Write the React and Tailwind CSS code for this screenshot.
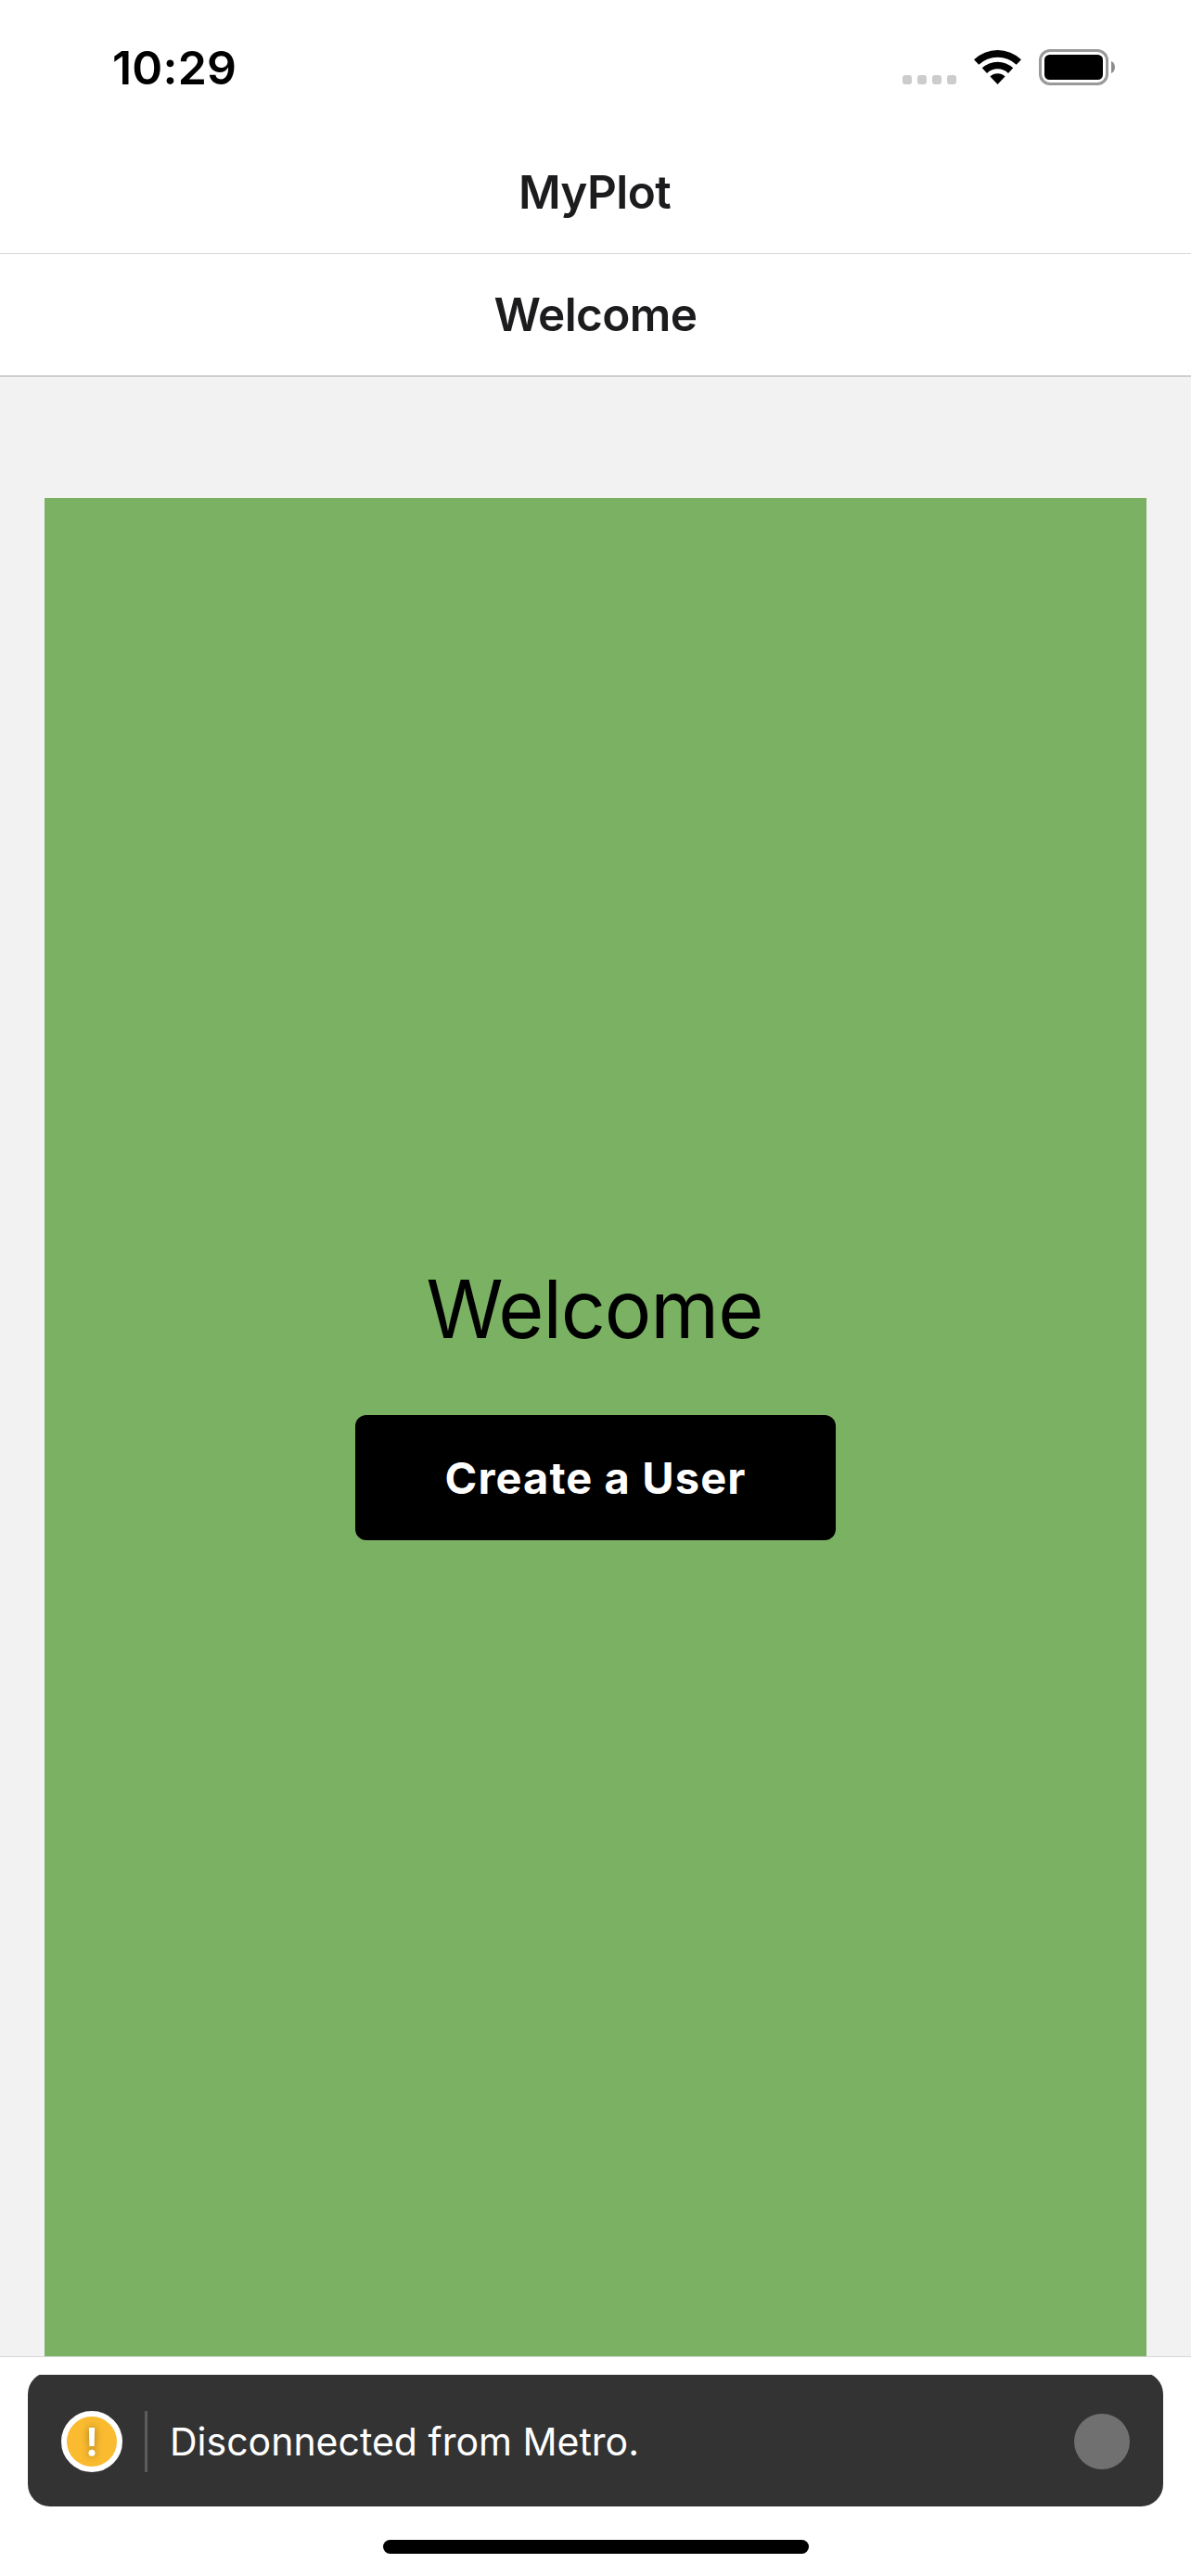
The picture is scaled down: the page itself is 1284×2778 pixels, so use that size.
function WifiIcon() {
  return (
    <svg viewBox="-76.5 -111 153 111" className="h-[37px] w-[51px]" fill="currentColor" aria-hidden="true">
      <path d="M-76.4 -80.5A111 111 0 0 1 76.4 -80.5L60.6 -63.8A88 88 0 0 0 -60.6 -63.8Z" />
      <path d="M-50.2 -52.9A73 73 0 0 1 50.2 -52.9L34.4 -36.3A50 50 0 0 0 -34.4 -36.3Z" />
      <path d="M-24.1 -25.4A35 35 0 0 1 24.1 -25.4L0 0Z" />
    </svg>
  );
}

function BatteryIcon() {
  return (
    <svg viewBox="0 0 83 39" className="h-[39px] w-[83px]" aria-hidden="true">
      <rect x="1.5" y="1.5" width="72" height="36" rx="10.5" fill="none" stroke="#999999" strokeWidth="3" />
      <rect x="6" y="6" width="63" height="27" rx="5.5" fill="#000" />
      <path d="M78 13C83.3 15 83.3 24 78 26Z" fill="#8c8c8c" />
    </svg>
  );
}

function StatusBar() {
  return (
    <div className="flex h-[141px] shrink-0 items-start justify-between bg-white pl-[121px] pr-[81px] text-black">
      <div className="mt-[43px] text-[50px] leading-[60px] font-semibold tracking-[0.2px]">10:29</div>
      <div className="mt-[53px] flex items-start">
        <div className="mt-[28px] mr-[19px] flex gap-[6px]">
          <span className="size-[10px] rounded-[3px] bg-[#cccccc]" />
          <span className="size-[10px] rounded-[3px] bg-[#cccccc]" />
          <span className="size-[10px] rounded-[3px] bg-[#cccccc]" />
          <span className="size-[10px] rounded-[3px] bg-[#cccccc]" />
        </div>
        <div className="mt-px mr-[19px]">
          <WifiIcon />
        </div>
        <BatteryIcon />
      </div>
    </div>
  );
}

function Banner() {
  return (
    <div className="mx-[30px] mt-[19px] h-[142px] overflow-hidden">
      <div className="-mt-[3px] flex h-[145px] items-center rounded-[24px] bg-[#333333] pl-[36px] pr-[36px] pt-[5px]">
        <div className="flex size-[66px] items-center justify-center rounded-full border-[6px] border-white bg-[#fabb30]">
          <svg viewBox="0 0 54 54" className="size-[54px] shrink-0 overflow-visible" aria-hidden="true">
            <g fill="#fff" className="drop-shadow-[0_0_4px_rgba(0,0,0,0.4)]">
              <path d="M23.9 12H30.1L29.6 32H24.4Z" />
              <circle cx="27" cy="39.3" r="3.5" />
            </g>
          </svg>
        </div>
        <div className="ml-[24px] h-[66px] w-[3px] bg-[#5c5c5c]" />
        <p className="ml-[24px] flex-1 text-[41px] leading-[50px] text-white">Disconnected from Metro.</p>
        <div className="size-[60px] rounded-full bg-[#707070]" />
      </div>
    </div>
  );
}

export default function App() {
  return (
    <div className="flex h-[2778px] w-[1284px] flex-col overflow-hidden bg-white font-['Inter',sans-serif]">
      <StatusBar />
      <header className="h-[133px] shrink-0 border-b border-[#d8d8d8] pr-[2px] text-center text-[49.5px] leading-[132px] font-semibold tracking-[-0.6px] text-[#1c1c1e]">
        MyPlot
      </header>
      <header className="h-[132px] shrink-0 border-b border-[#a7a7a7] text-center text-[49.5px] leading-[130px] font-semibold tracking-[-0.6px] text-[#1c1c1e]">
        Welcome
      </header>
      <main className="flex flex-1 flex-col bg-[#f2f2f2] px-[48px] pt-[131px]">
        <div className="flex flex-1 flex-col items-center bg-[#7bb163] pt-[815px]">
          <h1 className="mr-[3px] scale-x-97 text-[87px] leading-[120px] font-normal tracking-[-1.15px] text-black">
            Welcome
          </h1>
          <button className="mt-[54px] h-[135px] w-[518px] rounded-[12px] bg-black pt-px text-[47px] font-bold tracking-[1.1px] text-white">
            Create a User
          </button>
        </div>
      </main>
      <footer className="h-[237px] shrink-0 border-t border-[#d8d8d8] bg-white">
        <Banner />
        <div className="mx-auto mt-[36px] h-[15px] w-[459px] rounded-full bg-black" />
      </footer>
    </div>
  );
}
